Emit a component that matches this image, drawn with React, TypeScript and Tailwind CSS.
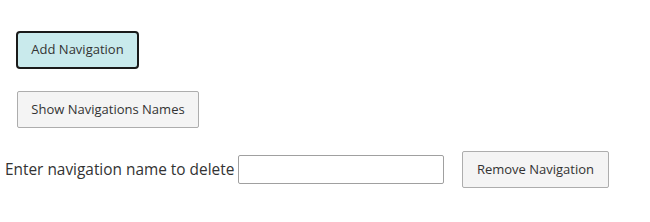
export default function App() {
  return (
    <div className="min-h-[222px] bg-white pt-[31px] font-['Open_Sans',sans-serif] text-[#222]">
      <div className="pl-4">
        <button className="flex h-[38px] w-[123px] items-center justify-center rounded-[4px] border-2 border-[#1a1a1a] bg-[#c9eaec] text-[13px] text-[#333]">
          Add Navigation
        </button>
      </div>
      <div className="mt-[22px] pl-[17px]">
        <button className="flex h-[37px] w-[182px] items-center justify-center rounded-[2px] border border-[#adadad] bg-[#f4f4f4] text-[13px] text-[#333]">
          Show Navigations Names
        </button>
      </div>
      <div className="mt-[23px] flex items-center pl-[5px]">
        <span className="w-[229px] whitespace-nowrap text-[15.4px] text-[#333]">Enter navigation name to delete</span>
        <input className="ml-[4px] h-[29px] w-[206px] rounded-[2px] border border-[#a0a0a0] bg-white px-1 text-[14px] outline-none" />
        <button className="ml-[18px] flex h-[37px] w-[147px] items-center justify-center rounded-[2px] border border-[#adadad] bg-[#f4f4f4] text-[13px] text-[#333]">
          Remove Navigation
        </button>
      </div>
    </div>
  );
}
